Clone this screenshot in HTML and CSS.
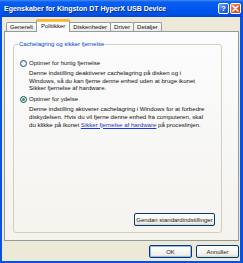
FILE: index.html
```html
<!DOCTYPE html>
<html lang="da">
<head>
  <meta charset="UTF-8">
  <title>Egenskaber for Kingston DT HyperX USB Device</title>
  <link rel="stylesheet" href="styles.css">
</head>
<body>
<div class="window">
  <div class="titlebar">
    <span class="title">Egenskaber for Kingston DT HyperX USB Device</span>
    <div class="caps">
      <span class="cap help">?</span>
      <span class="cap close">
        <svg width="7" height="7" viewBox="0 0 7 7"><path d="M1 1L6 6M6 1L1 6" stroke="#fff" stroke-width="1.6" stroke-linecap="round"/></svg>
      </span>
    </div>
  </div>

  <div class="client">
    <ul class="tabs">
      <li class="tab">Generelt</li>
      <li class="tab select">Politikker</li>
      <li class="tab">Diskenheder</li>
      <li class="tab">Driver</li>
      <li class="tab">Detaljer</li>
    </ul>

    <div class="panel">
      <div class="group">
        <span class="group-label">Cachelagring og sikker fjernelse</span>

        <div class="option">
          <div class="radio-row"><span class="radio"></span>Optimer for hurtig fjernelse</div>
          <p class="desc">Denne indstilling deaktiverer cachelagring på disken og i<br>
            Windows, så du kan fjerne denne enhed uden at bruge ikonet<br>
            Sikker fjernelse af hardware.</p>
        </div>

        <div class="option">
          <div class="radio-row"><span class="radio checked"></span>Optimer for ydelse</div>
          <p class="desc">Denne indstilling aktiverer cachelagring i Windows for at forbedre<br>
            diskydelsen. Hvis du vil fjerne denne enhed fra computeren, skal<br>
            du klikke på ikonet <a href="#">Sikker fjernelse af hardware</a> på proceslinjen.</p>
        </div>

        <div class="group-actions">
          <button class="btn wide">Gendan standardindstillinger</button>
        </div>
      </div>
    </div>

    <div class="actions">
      <button class="btn default">OK</button>
      <button class="btn">Annuller</button>
    </div>
  </div>
</div>
</body>
</html>
```

FILE: styles.css
```css
* {
  margin: 0;
  padding: 0;
  box-sizing: border-box;
}

body {
  font-family: "Liberation Sans", Arial, sans-serif;
  font-size: 6px;
  color: #111;
  background: #0055e5;
}

.window {
  width: 243px;
  height: 263px;
  display: flex;
  flex-direction: column;
  background: #0852e0;
  overflow: hidden;
}

/* title bar */
.titlebar {
  height: 17px;
  display: flex;
  align-items: center;
  padding: 0 2px 0 4px;
  background: linear-gradient(#3d8ef8 0, #0a5eef 2px, #0058ee 45%, #0052e6 80%, #0046d2 100%);
}

.title {
  flex: 1;
  color: #fff;
  font-weight: bold;
  font-size: 7px;
  white-space: nowrap;
  text-shadow: 1px 1px 0 #0a2a8a;
}

.caps {
  display: flex;
  gap: 1px;
  margin-top: -1px;
}

.cap {
  width: 11px;
  height: 11px;
  border: 1px solid #fff;
  border-radius: 2px;
  display: flex;
  align-items: center;
  justify-content: center;
  color: #fff;
  font-weight: bold;
  font-size: 8px;
}

.help {
  background: linear-gradient(135deg, #6ea2fb, #2663e8 60%, #1b4fd3);
}

.close {
  background: linear-gradient(135deg, #f29a7a, #e0552c 55%, #c8401c);
}

/* client area */
.client {
  flex: 1;
  margin: 0 3px 2px 2px;
  background: #ece9d8;
  display: flex;
  flex-direction: column;
  padding: 0 1px 3px 2px;
}

.tabs {
  list-style: none;
  display: flex;
  align-items: flex-end;
  height: 14px;
  padding-left: 2px;
}

.tab {
  height: 9px;
  line-height: 8px;
  padding: 0 3px;
  text-align: center;
  white-space: nowrap;
  border: 1px solid #919b9c;
  border-bottom: none;
  border-radius: 2px 2px 0 0;
  background: linear-gradient(#fff, #ecebe6);
  margin-right: -1px;
}

.tab.select {
  height: 13px;
  line-height: 11px;
  margin-bottom: -1px;
  padding: 0 4px;
  position: relative;
  z-index: 1;
  background: #fcfcfe;
  border-top: 2px solid #f8b536;
  box-shadow: inset 0 1px 0 #ffc83c;
}

.panel {
  height: 210px;
  border: 1px solid #919b9c;
  background: linear-gradient(#fcfcfe, #f4f3ee);
  display: flex;
  flex-direction: column;
  padding: 12px 16px 7px 8px;
}

/* group box */
.group {
  flex: 1;
  position: relative;
  border: 1px solid #d0d0bf;
  border-radius: 3px;
  padding: 14px 6px 6px 6px;
  display: flex;
  flex-direction: column;
}

.group-label {
  position: absolute;
  top: -5px;
  left: 4px;
  padding: 0 1px;
  line-height: 8px;
  color: #0046d5;
  background: #fbfbfc;
  white-space: nowrap;
}

.option + .option {
  margin-top: 3px;
}

.radio-row {
  display: flex;
  align-items: center;
  height: 8px;
  white-space: nowrap;
}

.radio {
  width: 7px;
  height: 7px;
  border: 1px solid #1c5180;
  border-radius: 50%;
  background: radial-gradient(circle at 70% 70%, #fff, #dcd8cf);
  margin-right: 2px;
  position: relative;
}

.radio.checked::after {
  content: "";
  position: absolute;
  left: 1px;
  top: 1px;
  width: 3px;
  height: 3px;
  border-radius: 50%;
  background: #2ea82e;
}

.desc {
  margin: 2px 0 0 9px;
  font-size: 6.1px;
  line-height: 7.7px;
  white-space: nowrap;
}

.desc a {
  color: #1a35d0;
}

.group-actions {
  margin-top: auto;
  display: flex;
  justify-content: flex-end;
}

/* buttons */
.btn {
  font-family: inherit;
  font-size: 6px;
  height: 13px;
  border: 1px solid #003c74;
  border-radius: 2px;
  background: linear-gradient(#fff, #f0f0ea 80%, #d6d0c5);
  color: #222;
}

.btn.wide {
  width: 81px;
}

.actions {
  margin-top: 4px;
  display: flex;
  justify-content: flex-end;
  gap: 4px;
}

.actions .btn {
  width: 43px;
}

.btn.default {
  box-shadow: inset 0 0 0 1px #97b7ee;
}
```
